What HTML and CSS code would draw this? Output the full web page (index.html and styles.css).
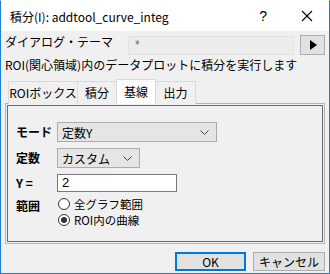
FILE: index.html
```html
<!DOCTYPE html>
<html lang="ja">
<head>
    <meta charset="UTF-8">
    <title>積分(I): addtool_curve_integ</title>
    <link rel="stylesheet" href="styles.css">
</head>
<body>
    <div class="window">
        <!-- Title bar -->
        <div class="titlebar">
            <span class="title">積分(I): addtool_curve_integ</span>
            <span class="help">?</span>
            <svg class="close" width="12" height="12" viewBox="0 0 12 12">
                <path d="M1 1 L11 11 M11 1 L1 11" stroke="#000" stroke-width="1.1" fill="none"/>
            </svg>
        </div>

        <div class="content">
            <!-- Theme row -->
            <div class="theme-row">
                <span class="theme-label">ダイアログ・テーマ</span>
                <div class="theme-box">*</div>
                <button class="arrow-btn">
                    <svg width="8" height="10" viewBox="0 0 8 10"><path d="M1 0 L8 5 L1 10 Z" fill="#000"/></svg>
                </button>
            </div>

            <p class="desc">ROI(関心領域)内のデータプロットに積分を実行します</p>

            <!-- Tabs -->
            <div class="tabs">
                <div class="tab t1">ROIボックス</div>
                <div class="tab t2">積分</div>
                <div class="tab t3 active">基線</div>
                <div class="tab t4">出力</div>
            </div>

            <div class="panel">
                <div class="group">
                    <label class="field-label">モード</label>
                    <div class="select wide">
                        <span>定数Y</span>
                        <svg class="chev" width="9" height="5" viewBox="0 0 9 5"><path d="M0.5 0.5 L4.5 4.5 L8.5 0.5" stroke="#444" fill="none"/></svg>
                    </div>

                    <label class="field-label">定数</label>
                    <div class="select narrow">
                        <span>カスタム</span>
                        <svg class="chev" width="9" height="5" viewBox="0 0 9 5"><path d="M0.5 0.5 L4.5 4.5 L8.5 0.5" stroke="#444" fill="none"/></svg>
                    </div>

                    <label class="field-label">Y =</label>
                    <div class="input">2</div>

                    <label class="field-label range-label">範囲</label>
                    <div class="radios">
                        <div class="radio"><span class="dot"></span>全グラフ範囲</div>
                        <div class="radio checked"><span class="dot"></span>ROI内の曲線</div>
                    </div>
                </div>
            </div>

            <!-- Buttons -->
            <div class="buttons">
                <button class="btn default">OK</button>
                <button class="btn">キャンセル</button>
            </div>
        </div>
    </div>
</body>
</html>
```
FILE: styles.css
```css
/* Global */
* {
    margin: 0;
    padding: 0;
    box-sizing: border-box;
}
body {
    font-family: "Noto Sans CJK JP", "Noto Sans", sans-serif;
    font-size: 12px;
    color: #000;
    background: #fff;
}

/* Window frame */
.window {
    width: 330px;
    height: 274px;
    border: 1px solid #1c7fd6;
    border-top-color: #fff;
    background: #f0f0f0;
    display: flex;
    flex-direction: column;
}

.titlebar {
    height: 30px;
    background: #fff;
    display: flex;
    align-items: center;
    padding-left: 9px;
}
.title {
    flex: 1;
    font-size: 12px;
}
.help {
    font-family: "Liberation Sans", sans-serif;
    font-size: 14px;
    margin-right: 34px;
}
.close {
    margin-right: 16px;
}

.content {
    padding: 4px 4px 0 4px;
    flex: 1;
    display: flex;
    flex-direction: column;
}

/* Theme row */
.theme-row {
    display: flex;
    align-items: center;
    height: 20px;
}
.theme-label {
    width: 123px;
    line-height: 14px;
    align-self: flex-start;
}
.theme-box {
    width: 166px;
    height: 19px;
    border: 1px solid #e2e2e2;
    background: #ececec;
    color: #666;
    padding-left: 6px;
    line-height: 17px;
    font-family: "Liberation Sans", sans-serif;
}
.arrow-btn {
    width: 25px;
    height: 20px;
    margin-left: 6px;
    border: 1px solid #adadad;
    background: #e1e1e1;
    display: flex;
    align-items: center;
    justify-content: center;
}

.desc {
    margin-top: 2px;
    line-height: 16px;
}

/* Tabs */
.tabs {
    display: flex;
    align-items: flex-end;
    margin-top: 6px;
    padding-left: 3px;
    height: 25px;
    position: relative;
    z-index: 1;
    margin-bottom: -1px;
}
.tab {
    height: 23px;
    border: 1px solid #d9d9d9;
    border-bottom: none;
    border-right: none;
    background: #f0f0f0;
    line-height: 22px;
    font-size: 12px;
    text-align: center;
}
.t1 { width: 69px; }
.t2 { width: 39px; }
.t3 { width: 40px; }
.t4 { width: 40px; }
.tab:last-child {
    border-right: 1px solid #d9d9d9;
}
.tab.active {
    height: 25px;
    background: #fff;
    border: 1px solid #d9d9d9;
    border-bottom: none;
    line-height: 24px;
    position: relative;
    z-index: 2;
}
.tab.active + .tab {
    border-left: none;
}

/* Panel and group box */
.panel {
    height: 141px;
    border: 1px solid #b4b4b4;
    padding: 1px;
}
.group {
    height: 100%;
    border: 1px solid #6a6a6a;
    padding: 16px 8px 0 8px;
    display: grid;
    grid-template-columns: 41px auto;
    grid-auto-rows: min-content;
    row-gap: 6px;
    align-items: center;
}
.field-label {
    font-weight: bold;
    font-size: 12px;
    line-height: 16px;
}
.range-label {
    align-self: start;
}

.select {
    height: 20px;
    border: 1px solid #acacac;
    background: #e5e5e5;
    display: flex;
    align-items: center;
    justify-content: space-between;
    padding: 0 7px 0 4px;
    font-size: 12px;
}
.select.wide {
    width: 160px;
}
.select.narrow {
    width: 83px;
}

.input {
    width: 120px;
    height: 18px;
    border: 1px solid #7a7a7a;
    background: #fff;
    padding-left: 4px;
    line-height: 16px;
    font-family: "Liberation Sans", sans-serif;
    font-size: 13px;
}

.radios {
    display: flex;
    flex-direction: column;
    margin-top: -2px;
}
.radio {
    display: flex;
    align-items: center;
    height: 16px;
    line-height: 16px;
    font-size: 11.5px;
}
.dot {
    width: 12px;
    height: 12px;
    border: 1px solid #333;
    border-radius: 50%;
    background: #fff;
    margin-right: 4px;
    margin-left: 1px;
    display: flex;
    align-items: center;
    justify-content: center;
}
.radio.checked .dot::after {
    content: "";
    width: 6px;
    height: 6px;
    border-radius: 50%;
    background: #333;
}

/* Bottom buttons */
.buttons {
    display: flex;
    justify-content: flex-end;
    gap: 7px;
    margin-top: 8px;
}
.btn {
    width: 72px;
    height: 19px;
    border: 1px solid #adadad;
    background: #e1e1e1;
    font-family: "Noto Sans CJK JP", sans-serif;
    font-size: 12px;
    line-height: 15px;
}
.btn.default {
    width: 71px;
    border: 2px solid #0078d7;
}
```
